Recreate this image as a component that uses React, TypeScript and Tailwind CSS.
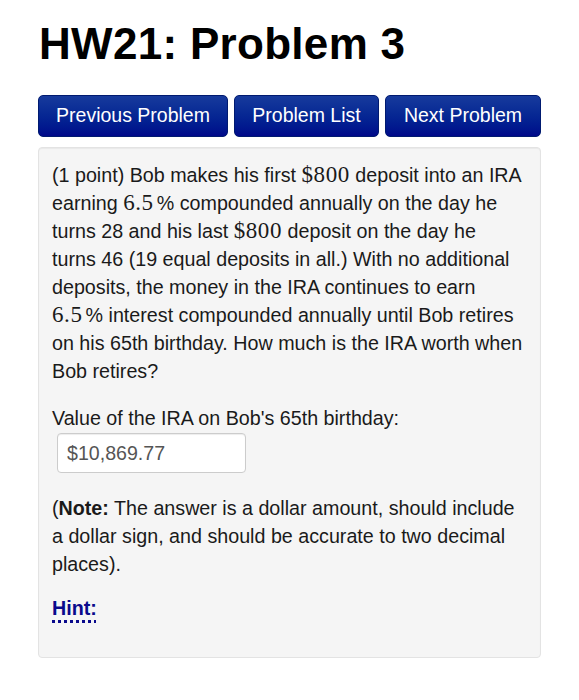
export default function App() {
  const M = ({ children }: { children: React.ReactNode }) => (
    <span className="font-['Liberation_Serif',serif] text-[23px] tracking-[0.6px]">{children}</span>
  );

  const buttons = [
    { label: 'Previous Problem', w: 'w-[190px]' },
    { label: 'Problem List', w: 'w-[145px]' },
    { label: 'Next Problem', w: 'w-[156px]' },
  ];

  return (
    <div className="min-h-screen bg-white font-['Liberation_Sans',Arial,sans-serif] text-[#1a1a1a]">
      <div className="pl-[38px] pr-[38px] pt-[19px]">
        <h1 className="pl-[1px] text-[44px] font-bold leading-[50px] tracking-[0.3px] text-black">HW21: Problem 3</h1>

        <div className="mt-[26px] flex gap-[6px]">
          {buttons.map((b) => (
            <button
              key={b.label}
              className={`${b.w} h-[42px] rounded-[5px] border border-[#001a70] bg-gradient-to-b from-[#173a9c] to-[#00088a] text-[19.5px] text-white`}
            >
              {b.label}
            </button>
          ))}
        </div>

        <div className="mt-[10px] w-[503px] rounded-[4px] border border-[#e3e3e3] bg-[#f5f5f5] px-[13px] pb-[35px] pt-[13px] text-[19.7px] leading-[28px] shadow-[inset_0_1px_1px_rgba(0,0,0,0.05)]">
          <p>
            (1 point) Bob makes his first <M>$800</M> deposit into an IRA earning <M>6.5</M>
            <span className="ml-[3px]">%</span> compounded annually on the day he turns 28 and his last <M>$800</M>{' '}
            deposit on the day he turns{'\u00a0'}46 (19 equal deposits in all.) With no additional deposits, the money
            in the IRA continues to earn <M>6.5</M>
            <span className="ml-[3px]">%</span> interest compounded annually until Bob retires on his 65th birthday.
            How much is the IRA worth when Bob retires?
          </p>

          <p className="mt-[19px]">Value of the IRA on Bob's 65th birthday:</p>
          <div className="ml-[5px] mt-[1px] flex h-[40px] w-[189px] items-center rounded-[4px] border border-[#cccccc] bg-white pl-[9px] text-[19.6px] text-[#555555] shadow-[inset_0_1px_1px_rgba(0,0,0,0.075)]">
            $10,869.77
          </div>

          <p className="mt-[21px]">
            (<b>Note:</b> The answer is a dollar amount, should include a dollar sign, and should be accurate to
            two decimal places).
          </p>

          <div className="mt-[16px]">
            <a
              href="#"
              className="font-bold text-[#0a0a8c] underline decoration-dotted decoration-[3px] underline-offset-[5px]"
            >
              Hint:
            </a>
          </div>
        </div>
      </div>
    </div>
  );
}
